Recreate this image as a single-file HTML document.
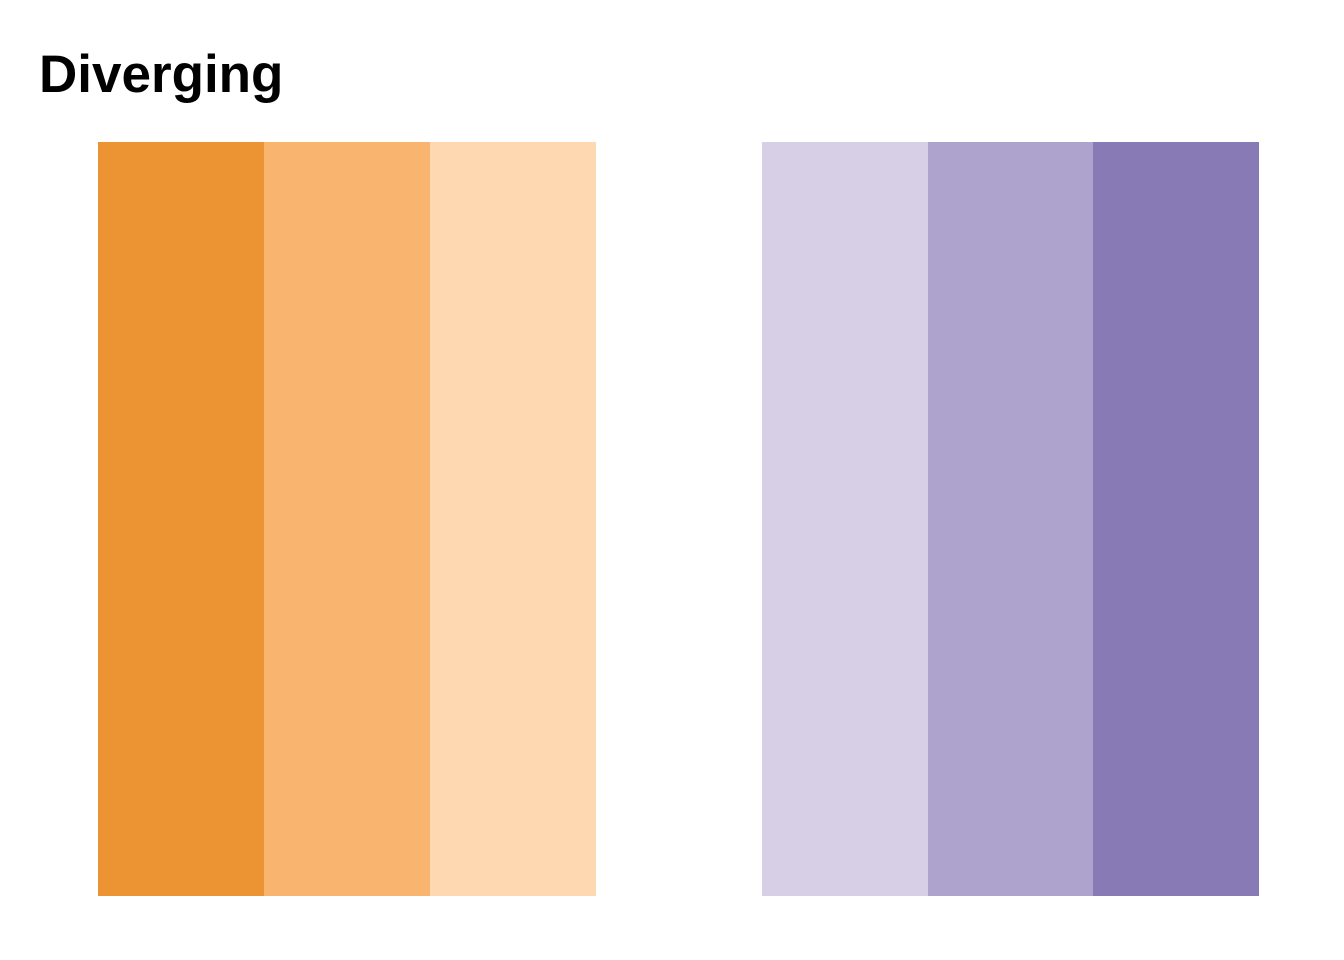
<!DOCTYPE html>
<html><head><meta charset="utf-8"><style>
html,body{margin:0;padding:0;background:#fff;width:1344px;height:960px;overflow:hidden;position:relative}
.t{position:absolute;left:39px;top:48px;font:bold 53px/54px "Liberation Sans",sans-serif;color:#000;white-space:nowrap}
.b{position:absolute;top:142px;height:754px}
</style></head><body>
<div class="t">Diverging</div>
<div class="b" style="left:98px;width:166px;background:#ec9433"></div>
<div class="b" style="left:264px;width:166px;background:#f9b570"></div>
<div class="b" style="left:430px;width:166px;background:#fed8b1"></div>
<div class="b" style="left:762px;width:166px;background:#d6cfe6"></div>
<div class="b" style="left:928px;width:165px;background:#aea3cd"></div>
<div class="b" style="left:1093px;width:166px;background:#887ab5"></div>
</body></html>
